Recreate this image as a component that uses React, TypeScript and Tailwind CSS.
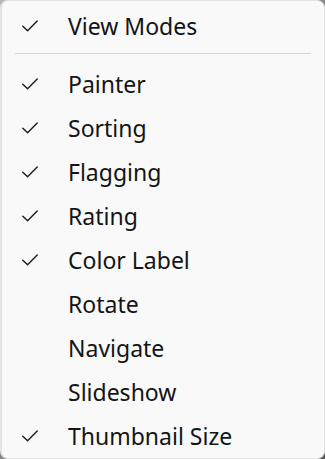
const items: { label: string; checked: boolean }[] = [
  { label: "Painter", checked: true },
  { label: "Sorting", checked: true },
  { label: "Flagging", checked: true },
  { label: "Rating", checked: true },
  { label: "Color Label", checked: true },
  { label: "Rotate", checked: false },
  { label: "Navigate", checked: false },
  { label: "Slideshow", checked: false },
  { label: "Thumbnail Size", checked: true },
];

function Check() {
  return (
    <svg width="16" height="12" viewBox="0 0 16 12" fill="none">
      <polyline
        points="0.8,6.2 5.6,10.8 15.2,1"
        stroke="#1b1b1b"
        strokeWidth="1.4"
        strokeLinecap="round"
        strokeLinejoin="round"
      />
    </svg>
  );
}

function Row({ label, checked }: { label: string; checked: boolean }) {
  return (
    <div className="flex h-[44px] items-center">
      <div className="flex w-[66px] shrink-0 items-center pl-[20px]">
        {checked && <Check />}
      </div>
      <span className="text-[23px] leading-none text-[#141414]">{label}</span>
    </div>
  );
}

export default function App() {
  return (
    <div
      className="h-[459px] w-[325px] bg-gradient-to-br from-[#b8b8b8] to-[#5a5a5a]"
      style={{ fontFamily: '"Noto Sans", "Open Sans", sans-serif' }}
    >
      <div className="h-full w-full rounded-[8px] border-l-2 border-t border-r border-b border-[#e3e3e3] bg-[#f9f9f9] pt-[3px]">
        <Row label="View Modes" checked />
        <div className="mx-[13px] mb-[8px] mt-[5px] h-px bg-[#d6d6d6]" />
        {items.map((item) => (
          <Row key={item.label} label={item.label} checked={item.checked} />
        ))}
      </div>
    </div>
  );
}
